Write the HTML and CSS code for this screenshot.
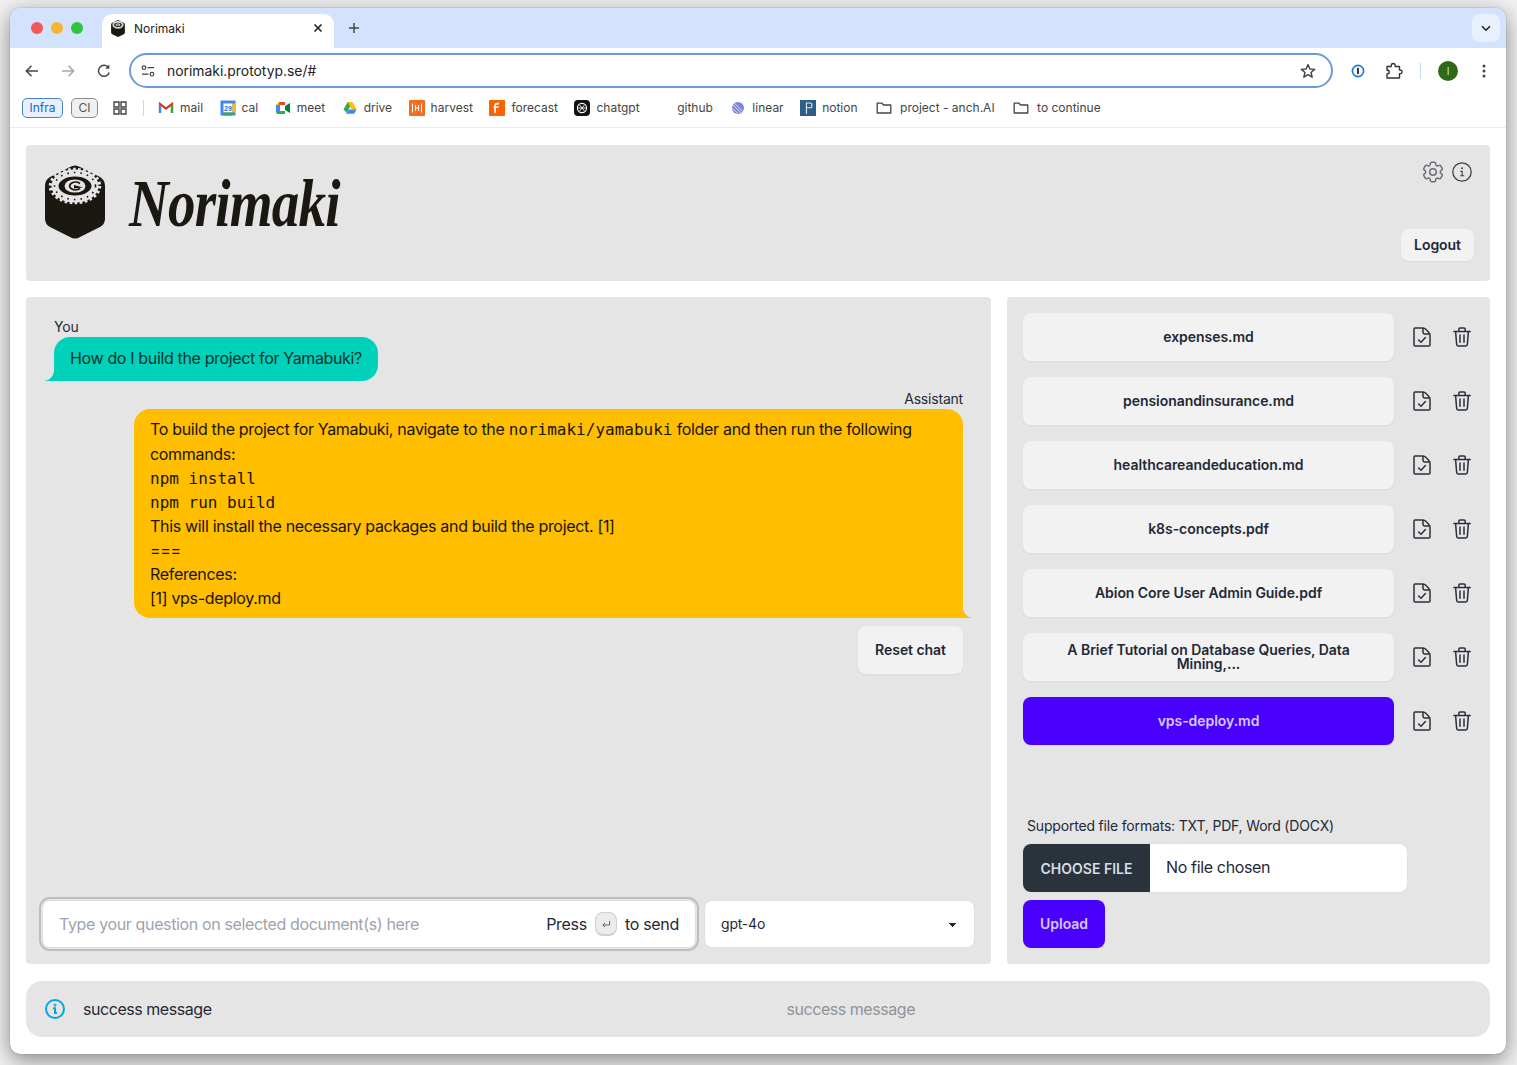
FILE: index.html
```html
<!DOCTYPE html>
<html lang="en">
<head>
    <meta charset="UTF-8">
    <title>Norimaki</title>
    <link rel="stylesheet" href="styles.css">
</head>
<body>
    <svg class="defs" width="0" height="0">
        <symbol id="roll" viewBox="0 0 60 74">
            <path d="M25 2 Q30 -1 35 2 L55 12 Q60 15 60 21 V54 Q60 59 55 62 L35 72 Q30 75 25 72 L5 62 Q0 59 0 54 V21 Q0 15 5 12 Z" fill="#1b1811"/>
            <ellipse cx="30" cy="21" rx="20" ry="13" fill="none" stroke="#e5e5e5" stroke-width="7"/>
            <ellipse cx="30" cy="21" rx="24.5" ry="16.5" fill="none" stroke="#e5e5e5" stroke-width="3.5" stroke-dasharray="2.6 2.4"/>
            <ellipse cx="30" cy="21" rx="20.5" ry="13.5" fill="none" stroke="#1b1811" stroke-width="1.6" stroke-dasharray="1.6 5"/>
            <ellipse cx="30" cy="21" rx="13" ry="8.4" fill="#1b1811"/>
            <ellipse cx="30" cy="21" rx="10.5" ry="6.6" fill="#e5e5e5"/>
            <path d="M35 18.4 A6 3.8 0 1 0 35 23.6" fill="none" stroke="#1b1811" stroke-width="1.8"/>
            <path d="M29 20 L38 22.4 L29 23.4 Z" fill="#1b1811"/>
        </symbol>
        <symbol id="folder" viewBox="0 0 16 16">
            <path d="M1.2 3.2 H6 L7.6 5 H14.8 V13 H1.2 Z" fill="none" stroke="#444" stroke-width="1.3" stroke-linejoin="round"/>
        </symbol>
        <symbol id="doc" viewBox="0 0 18 20">
            <path d="M2 1 H10 Q11.5 1 12.8 2.3 L15.8 5.4 Q17 6.6 17 8 V18 Q17 19 16 19 H2 Q1 19 1 18 V2 Q1 1 2 1 Z" fill="none" stroke="#2a323c" stroke-width="1.5"/>
            <path d="M10 1 V5 Q10 7 12 7 H17" fill="none" stroke="#2a323c" stroke-width="1.5"/>
            <path d="M5.6 13 L8 15.3 L12.4 10.6" fill="none" stroke="#2a323c" stroke-width="1.5" stroke-linecap="round" stroke-linejoin="round"/>
        </symbol>
        <symbol id="trash" viewBox="0 0 18 20">
            <path d="M0.8 4.4 H17.2" fill="none" stroke="#2a323c" stroke-width="1.5" stroke-linecap="round"/>
            <path d="M5.8 4 V2.2 Q5.8 1 7 1 H11 Q12.2 1 12.2 2.2 V4" fill="none" stroke="#2a323c" stroke-width="1.5"/>
            <path d="M2.6 4.6 L3.6 17 Q3.8 19 5.6 19 H12.4 Q14.2 19 14.4 17 L15.4 4.6" fill="none" stroke="#2a323c" stroke-width="1.5"/>
            <path d="M7 8 V15.2 M11 8 V15.2" fill="none" stroke="#2a323c" stroke-width="1.5" stroke-linecap="round"/>
        </symbol>
    </svg>

    <div class="window">
        <div class="tabstrip">
            <div class="lights">
                <span class="light red"></span>
                <span class="light yellow"></span>
                <span class="light green"></span>
            </div>
            <div class="tab">
                <svg class="tab-icon" width="14" height="17"><use href="#roll"/></svg>
                <span class="tab-title">Norimaki</span>
                <svg class="tab-close" width="10" height="10" viewBox="0 0 10 10"><path d="M1.5 1.5 L8.5 8.5 M8.5 1.5 L1.5 8.5" stroke="#222" stroke-width="1.6"/></svg>
            </div>
            <svg class="tab-new" width="12" height="12" viewBox="0 0 12 12"><path d="M6 1 V11 M1 6 H11" stroke="#444" stroke-width="1.5"/></svg>
            <div class="tab-search">
                <svg width="10" height="7" viewBox="0 0 10 7"><path d="M1 1.2 L5 5.2 L9 1.2" fill="none" stroke="#222" stroke-width="1.6"/></svg>
            </div>
        </div>

        <div class="toolbar">
            <svg class="nav-icon" width="16" height="16" viewBox="0 0 16 16"><path d="M14 8 H2.5 M7.5 2.8 L2.3 8 L7.5 13.2" fill="none" stroke="#474747" stroke-width="1.5"/></svg>
            <svg class="nav-icon" width="16" height="16" viewBox="0 0 16 16"><path d="M2 8 H13.5 M8.5 2.8 L13.7 8 L8.5 13.2" fill="none" stroke="#a8a8a8" stroke-width="1.5"/></svg>
            <svg class="nav-icon" width="16" height="16" viewBox="0 0 16 16"><path d="M13.2 9.5 A5.5 5.5 0 1 1 12.4 4.6" fill="none" stroke="#474747" stroke-width="1.5"/><path d="M13.4 1.6 V5.8 H9.2 Z" fill="#474747"/></svg>
            <div class="omnibox">
                <svg width="14" height="12" viewBox="0 0 14 12"><circle cx="3" cy="2.6" r="1.8" fill="none" stroke="#444" stroke-width="1.2"/><path d="M6.5 2.6 H13 M1 9.2 H7.5" stroke="#444" stroke-width="1.3"/><circle cx="11" cy="9.2" r="1.8" fill="none" stroke="#444" stroke-width="1.2"/></svg>
                <span class="url">norimaki.prototyp.se/#</span>
                <svg class="star" width="16" height="16" viewBox="0 0 16 16"><path d="M8 1.6 L9.9 6 L14.7 6.4 L11 9.5 L12.2 14.2 L8 11.7 L3.8 14.2 L5 9.5 L1.3 6.4 L6.1 6 Z" fill="none" stroke="#444" stroke-width="1.4" stroke-linejoin="round"/></svg>
            </div>
            <svg class="ext-pass" width="14" height="14" viewBox="0 0 14 14"><circle cx="7" cy="7" r="5.6" fill="none" stroke="#1a73e8" stroke-width="1.6"/><rect x="6.1" y="3.8" width="1.8" height="6.4" rx="0.6" fill="#222"/></svg>
            <svg class="ext-puzzle" width="18" height="18" viewBox="0 0 18 18"><path d="M2 4.5 H6.2 Q6 1.5 8.2 1.5 Q10.4 1.5 10.2 4.5 H14.5 V8 Q17 7.8 17 9.8 Q17 11.8 14.5 11.6 V16 H2 V12 Q4.2 11.8 4.2 10 Q4.2 8.2 2 8 Z" fill="none" stroke="#333" stroke-width="1.4" stroke-linejoin="round"/></svg>
            <span class="toolbar-sep"></span>
            <span class="avatar">I</span>
            <svg class="kebab" width="4" height="14" viewBox="0 0 4 14"><circle cx="2" cy="2" r="1.5" fill="#444"/><circle cx="2" cy="7" r="1.5" fill="#444"/><circle cx="2" cy="12" r="1.5" fill="#444"/></svg>
        </div>

        <div class="bookmarks">
            <span class="chip chip-blue">Infra</span>
            <span class="chip chip-gray">CI</span>
            <svg class="apps" width="14" height="14" viewBox="0 0 14 14"><path d="M1 1 H6 V6 H1 Z M8 1 H13 V6 H8 Z M1 8 H6 V13 H1 Z M8 8 H13 V13 H8 Z" fill="none" stroke="#444" stroke-width="1.4"/></svg>
            <span class="bookmark-sep"></span>
            <span class="bookmark">
                <svg width="16" height="16" viewBox="0 0 16 16"><path d="M2 13 V4 L8 8.6 L14 4 V13" fill="none" stroke="#d93025" stroke-width="2.2"/><path d="M2 13 V5" stroke="#4285f4" stroke-width="2.4"/><path d="M14 13 V5" stroke="#34a853" stroke-width="2.4"/></svg>
                mail
            </span>
            <span class="bookmark">
                <svg width="16" height="16" viewBox="0 0 16 16"><rect x="0.5" y="0.5" width="15" height="15" fill="#4285f4"/><rect x="3.5" y="3.5" width="9" height="9" fill="#fff"/><rect x="12.5" y="3.5" width="3" height="9" fill="#fbbc04"/><rect x="3.5" y="12.5" width="9" height="3" fill="#34a853"/><text class="cal-day" x="8" y="11">29</text></svg>
                cal
            </span>
            <span class="bookmark">
                <svg width="16" height="16" viewBox="0 0 16 16"><path d="M1 5 L4 2 H10 V6 H1 Z" fill="#fbbc04"/><path d="M1 5 H5 V11 H1 Z" fill="#4285f4"/><path d="M1 11 H10 V14 H3 Q1 14 1 12 Z" fill="#34a853"/><path d="M5 5 H10 V11 H5 Z" fill="#fff"/><path d="M10 6 L15 3 V13 L10 10 Z" fill="#00832d"/><path d="M4 2 H10 V5 H4 Z" fill="#ea4335"/></svg>
                meet
            </span>
            <span class="bookmark">
                <svg width="16" height="16" viewBox="0 0 16 16"><path d="M5.6 2 H10.4 L7.4 8 L4.7 12.8 L1.5 9.5 Z" fill="#34a853"/><path d="M5.6 2 H10.4 L14.6 9.5 H9.6 Z" fill="#fbbc04"/><path d="M4 13.8 L6.6 9.5 H14.6 L12.2 13.8 Z" fill="#4285f4"/></svg>
                drive
            </span>
            <span class="bookmark">
                <svg width="16" height="16" viewBox="0 0 16 16"><rect width="16" height="16" rx="1" fill="#f36c21"/><path d="M3.5 3.5 V12.5 M6.5 5 V11 M9.5 5 V11 M12.5 3.5 V12.5 M6.5 8 H9.5" stroke="#fff" stroke-width="1.1"/></svg>
                harvest
            </span>
            <span class="bookmark">
                <svg width="16" height="16" viewBox="0 0 16 16"><rect width="16" height="16" rx="1" fill="#f96302"/><path d="M6 13 V6 Q6 3.6 8.4 3.6 H10 M4.6 7 H9.6" fill="none" stroke="#fff" stroke-width="1.6"/></svg>
                forecast
            </span>
            <span class="bookmark">
                <svg width="16" height="16" viewBox="0 0 16 16"><rect width="16" height="16" rx="4" fill="#111"/><circle cx="8" cy="8" r="4.6" fill="none" stroke="#fff" stroke-width="1.1"/><path d="M5.6 5 L10.4 11 M10.4 5 L5.6 11 M3.6 8 H12.4" stroke="#fff" stroke-width="0.9"/></svg>
                chatgpt
            </span>
            <span class="bookmark bookmark-wide">
                <span class="blank-icon"></span>
                github
            </span>
            <span class="bookmark">
                <svg width="16" height="16" viewBox="0 0 16 16"><circle cx="8" cy="8" r="6" fill="#7b86d8"/><path d="M3 5 L11 13 M2.4 8 L8 13.6 M4.6 3.4 L12.6 11.4" stroke="#e4e7fa" stroke-width="0.9"/></svg>
                linear
            </span>
            <span class="bookmark">
                <svg width="16" height="16" viewBox="0 0 16 16"><rect width="16" height="16" fill="#2f5f86"/><path d="M6.4 14 V3 H10 Q12 3 12 5.4 Q12 7.8 10 7.8 H6.4" fill="none" stroke="#dfe8f0" stroke-width="1.1"/></svg>
                notion
            </span>
            <span class="bookmark bookmark-folder">
                <svg width="16" height="16"><use href="#folder"/></svg>
                project - anch.AI
            </span>
            <span class="bookmark bookmark-folder">
                <svg width="16" height="16"><use href="#folder"/></svg>
                to continue
            </span>
        </div>

        <div class="page">
            <div class="panel top-panel">
                <div class="brand">
                    <svg class="brand-icon" width="60" height="74"><use href="#roll"/></svg>
                    <span class="brand-name">Norimaki</span>
                </div>
                <div class="top-actions">
                    <div class="top-icons">
                        <svg width="26" height="26" viewBox="0 0 24 24" fill="none" stroke="#6b6f75" stroke-width="1.4"><path d="M9.594 3.94c.09-.542.56-.94 1.11-.94h2.593c.55 0 1.02.398 1.11.94l.213 1.281c.063.374.313.686.645.87.074.04.147.083.22.127.325.196.72.257 1.075.124l1.217-.456a1.125 1.125 0 0 1 1.37.49l1.296 2.247a1.125 1.125 0 0 1-.26 1.431l-1.003.827c-.293.241-.438.613-.43.992a7.723 7.723 0 0 1 0 .255c-.008.378.137.75.43.991l1.004.827c.424.35.534.955.26 1.43l-1.298 2.247a1.125 1.125 0 0 1-1.369.491l-1.217-.456c-.355-.133-.75-.072-1.076.124a6.47 6.47 0 0 1-.22.128c-.331.183-.581.495-.644.869l-.213 1.281c-.09.543-.56.94-1.11.94h-2.594c-.55 0-1.019-.398-1.11-.94l-.213-1.281c-.062-.374-.312-.686-.644-.87a6.52 6.52 0 0 1-.22-.127c-.325-.196-.72-.257-1.076-.124l-1.217.456a1.125 1.125 0 0 1-1.369-.49l-1.297-2.247a1.125 1.125 0 0 1 .26-1.431l1.004-.827c.292-.24.437-.613.43-.991a6.932 6.932 0 0 1 0-.255c.007-.38-.138-.751-.43-.992l-1.004-.827a1.125 1.125 0 0 1-.26-1.43l1.297-2.247a1.125 1.125 0 0 1 1.37-.491l1.216.456c.356.133.751.072 1.076-.124.072-.044.146-.086.22-.128.332-.183.582-.495.644-.869l.214-1.28Z"/><path d="M15 12a3 3 0 1 1-6 0 3 3 0 0 1 6 0Z"/></svg>
                        <svg width="22" height="22" viewBox="0 0 22 22" fill="none" stroke="#3f444b" stroke-width="1.3"><circle cx="11" cy="11" r="9.2"/><path d="M9.8 10.4 H11.2 V14.8 M9.6 14.8 H12.8" stroke-width="1.1" stroke-linecap="round"/><circle cx="11" cy="7.2" r="0.4"/></svg>
                    </div>
                    <button class="btn btn-sm">Logout</button>
                </div>
            </div>

            <div class="main-row">
                <div class="panel chat-panel">
                    <div class="chat chat-start">
                        <div class="chat-header">You</div>
                        <div class="bubble bubble-user">How do I build the project for Yamabuki?</div>
                    </div>
                    <div class="chat chat-end">
                        <div class="chat-header">Assistant</div>
                        <div class="bubble bubble-assistant">
                            <div class="bubble-line">To build the project for Yamabuki, navigate to the <code>norimaki/yamabuki</code> folder and then run the following</div>
                            <div class="bubble-line">commands:</div>
                            <div class="bubble-line"><code>npm install</code></div>
                            <div class="bubble-line"><code>npm run build</code></div>
                            <div class="bubble-line">This will install the necessary packages and build the project. [1]</div>
                            <div class="bubble-line">===</div>
                            <div class="bubble-line">References:</div>
                            <div class="bubble-line">[1] vps-deploy.md</div>
                        </div>
                    </div>
                    <div class="chat-reset">
                        <button class="btn btn-reset">Reset chat</button>
                    </div>
                    <div class="chat-form">
                        <label class="question">
                            <input class="question-input" type="text" placeholder="Type your question on selected document(s) here">
                            <span class="press">Press</span>
                            <span class="kbd">
                                <svg width="10" height="8" viewBox="0 0 10 8"><path d="M8.6 1 V5 H2 M4 3 L1.8 5 L4 7" fill="none" stroke="#555" stroke-width="0.9"/></svg>
                            </span>
                            <span class="press">to send</span>
                        </label>
                        <select class="model-select">
                            <option>gpt-4o</option>
                        </select>
                    </div>
                </div>

                <div class="panel side-panel">
                    <div class="files">
                        <div class="file-row">
                            <button class="btn file-btn">expenses.md</button>
                            <svg class="row-icon" width="18" height="20"><use href="#doc"/></svg>
                            <svg class="row-icon" width="18" height="20"><use href="#trash"/></svg>
                        </div>
                        <div class="file-row">
                            <button class="btn file-btn">pensionandinsurance.md</button>
                            <svg class="row-icon" width="18" height="20"><use href="#doc"/></svg>
                            <svg class="row-icon" width="18" height="20"><use href="#trash"/></svg>
                        </div>
                        <div class="file-row">
                            <button class="btn file-btn">healthcareandeducation.md</button>
                            <svg class="row-icon" width="18" height="20"><use href="#doc"/></svg>
                            <svg class="row-icon" width="18" height="20"><use href="#trash"/></svg>
                        </div>
                        <div class="file-row">
                            <button class="btn file-btn">k8s-concepts.pdf</button>
                            <svg class="row-icon" width="18" height="20"><use href="#doc"/></svg>
                            <svg class="row-icon" width="18" height="20"><use href="#trash"/></svg>
                        </div>
                        <div class="file-row">
                            <button class="btn file-btn">Abion Core User Admin Guide.pdf</button>
                            <svg class="row-icon" width="18" height="20"><use href="#doc"/></svg>
                            <svg class="row-icon" width="18" height="20"><use href="#trash"/></svg>
                        </div>
                        <div class="file-row">
                            <button class="btn file-btn">A Brief Tutorial on Database Queries, Data Mining,...</button>
                            <svg class="row-icon" width="18" height="20"><use href="#doc"/></svg>
                            <svg class="row-icon" width="18" height="20"><use href="#trash"/></svg>
                        </div>
                        <div class="file-row">
                            <button class="btn file-btn btn-primary">vps-deploy.md</button>
                            <svg class="row-icon" width="18" height="20"><use href="#doc"/></svg>
                            <svg class="row-icon" width="18" height="20"><use href="#trash"/></svg>
                        </div>
                    </div>
                    <div class="upload">
                        <div class="formats">Supported file formats: TXT, PDF, Word (DOCX)</div>
                        <div class="file-input">
                            <span class="file-choose">Choose file</span>
                            <span class="file-none">No file chosen</span>
                        </div>
                        <button class="btn btn-primary upload-btn">Upload</button>
                    </div>
                </div>
            </div>

            <div class="alert">
                <svg width="24" height="24" viewBox="0 0 24 24" fill="none" stroke="#00a4ef" stroke-width="2"><circle cx="12" cy="12" r="9"/><path d="M10.8 11.2 H12 V16 H13.2" stroke-linecap="round"/><circle cx="12" cy="8" r="0.5"/></svg>
                <span class="alert-msg">success message</span>
                <span class="alert-center">success message</span>
            </div>
        </div>
    </div>
</body>
</html>
```

FILE: styles.css
```css
html, body {
    height: 100%;
}
body {
    font-family: Inter, "Liberation Sans", sans-serif;
    background-color: #f1f1f1;
    margin: 0;
    padding: 8px 11px 0 10px;
    box-sizing: border-box;
    overflow: hidden;
    color: #1f2937;
}
.defs {
    display: block;
    height: 0;
}
.window {
    width: 1496px;
    height: 1046px;
    background-color: #ffffff;
    border-radius: 10px;
    overflow: hidden;
    box-shadow: 0 6px 22px rgba(0, 0, 0, 0.45), 0 0 1px rgba(0, 0, 0, 0.5);
}

/* browser chrome */
.tabstrip {
    height: 40px;
    background-color: #d3e3fd;
    display: flex;
    align-items: flex-end;
    box-sizing: border-box;
}
.lights {
    display: flex;
    gap: 8px;
    align-self: flex-start;
    margin: 14px 0 0 21px;
}
.light {
    width: 12px;
    height: 12px;
    border-radius: 50%;
}
.red { background-color: #f2575a; }
.yellow { background-color: #f5b52e; }
.green { background-color: #2ec440; }
.tab {
    width: 232px;
    height: 34px;
    margin-left: 19px;
    background-color: #ffffff;
    border-radius: 10px 10px 0 0;
    display: flex;
    align-items: center;
    padding: 0 11px 6px 9px;
    box-sizing: border-box;
}
.tab-icon {
    flex: none;
}
.tab-title {
    flex: 1;
    font-size: 12px;
    color: #222;
    margin-left: 9px;
}
.tab-new {
    margin: 0 0 14px 14px;
}
.tab-search {
    margin: 0 6px 6px auto;
    width: 28px;
    height: 28px;
    border-radius: 8px;
    background-color: #e9f0fd;
    display: flex;
    align-items: center;
    justify-content: center;
}
.toolbar {
    height: 44px;
    display: flex;
    align-items: center;
    padding: 2px 0 0 14px;
    background-color: #ffffff;
    box-sizing: border-box;
}
.nav-icon {
    margin-right: 20px;
    flex: none;
}
.nav-icon:nth-child(3) {
    margin-right: 17px;
}
.omnibox {
    width: 1204px;
    height: 35px;
    margin-top: -1px;
    flex: none;
    box-sizing: border-box;
    border: 2px solid #6f9ad8;
    border-radius: 18px;
    display: flex;
    align-items: center;
    padding: 0 15px 0 10px;
}
.url {
    margin-left: 12px;
    font-size: 13.9px;
    color: #222;
}
.star {
    margin-left: auto;
}
.ext-pass {
    margin-left: 18px;
    flex: none;
}
.ext-puzzle {
    margin-left: 20px;
    flex: none;
}
.toolbar-sep {
    width: 1px;
    height: 16px;
    background-color: #c9d7ee;
    margin-left: 17px;
}
.avatar {
    width: 20px;
    height: 20px;
    margin-left: 17px;
    border-radius: 50%;
    background-color: #2d6a1c;
    color: #d9e8d2;
    font-size: 10px;
    display: flex;
    align-items: center;
    justify-content: center;
    flex: none;
}
.kebab {
    margin-left: 24px;
    flex: none;
}
.bookmarks {
    height: 36px;
    box-sizing: border-box;
    border-bottom: 1px solid #ececec;
    padding: 0 0 4px 12px;
    display: flex;
    align-items: center;
    font-size: 12px;
    color: #444;
}
.chip {
    height: 20px;
    box-sizing: border-box;
    border-radius: 5px;
    display: flex;
    align-items: center;
    justify-content: center;
    font-size: 12px;
}
.chip-blue {
    width: 41px;
    border: 1px solid #4a7fc9;
    background-color: #e8f0fd;
    color: #1f66c1;
}
.chip-gray {
    width: 27px;
    margin-left: 8px;
    border: 1px solid #8a8a8a;
    background-color: #f0f0f2;
    color: #555;
}
.apps {
    margin-left: 15px;
}
.bookmark-sep {
    width: 1px;
    height: 16px;
    background-color: #c9d7ee;
    margin: 0 7px 0 16px;
}
.bookmark {
    display: flex;
    align-items: center;
    gap: 6px;
    margin-left: 7px;
    margin-right: 9.5px;
    white-space: nowrap;
}
.bookmark svg {
    flex: none;
}
.bookmark-wide {
    margin-left: 6px;
    margin-right: 10.5px;
}
.bookmark-folder {
    gap: 8px;
    margin-left: 9px;
}
.blank-icon {
    width: 16px;
    height: 16px;
}
.cal-day {
    font-family: "Liberation Sans", sans-serif;
    font-size: 7px;
    font-weight: bold;
    fill: #1a73e8;
    text-anchor: middle;
}

/* app */
.page {
    padding: 17px 16px;
    display: flex;
    flex-direction: column;
}
.panel {
    background-color: #e5e5e5;
    border-radius: 4px;
    box-sizing: border-box;
}
.top-panel {
    height: 136px;
    display: flex;
    justify-content: space-between;
    padding: 20px 16px 20px 19px;
}
.brand {
    display: flex;
    align-items: flex-start;
}
.brand-name {
    font-family: "Liberation Serif", serif;
    font-style: italic;
    font-weight: bold;
    font-size: 68px;
    line-height: 76px;
    color: #1b1811;
    margin-left: 24px;
    letter-spacing: -1px;
    transform: scaleX(0.81);
    transform-origin: left center;
}
.top-actions {
    display: flex;
    flex-direction: column;
    align-items: flex-end;
    justify-content: space-between;
}
.top-icons {
    display: flex;
    align-items: center;
    gap: 5px;
    margin-top: -6px;
    margin-right: 1px;
}
.btn {
    font-family: Inter, "Liberation Sans", sans-serif;
    background-color: #f2f2f2;
    color: #1f2937;
    border: none;
    border-radius: 8px;
    height: 48px;
    padding: 0 16px;
    font-size: 14px;
    font-weight: 600;
    line-height: 14px;
    letter-spacing: -0.05px;
    box-shadow: 0 1px 2px rgba(0, 0, 0, 0.05);
}
.btn-sm {
    height: 32px;
    padding: 0 13px;
}
.btn-reset {
    padding: 0 17px;
}
.btn-primary {
    background-color: #4a00ff;
    color: #d6c8ff;
}
.main-row {
    display: flex;
    gap: 16px;
    margin-top: 16px;
    height: 667px;
}
.chat-panel {
    width: 965px;
    padding: 16px;
    display: flex;
    flex-direction: column;
}
.chat {
    padding: 4px 12px;
    display: flex;
    flex-direction: column;
}
.chat-end {
    align-items: flex-end;
}
.chat-start {
    align-items: flex-start;
}
.chat-header {
    font-size: 14px;
    line-height: 20px;
    letter-spacing: -0.2px;
}
.bubble {
    position: relative;
    font-size: 16px;
    line-height: 24px;
    letter-spacing: -0.32px;
    padding: 8px 16px;
    box-sizing: border-box;
    border-radius: 16px;
}
.bubble-user {
    min-height: 44px;
    padding-top: 9px;
    padding-bottom: 7px;
    background-color: #00d1b9;
    color: #00332c;
    border-bottom-left-radius: 0;
    letter-spacing: -0.35px;
}
.bubble-user::before {
    content: "";
    position: absolute;
    left: -10px;
    bottom: 0;
    width: 10px;
    height: 10px;
    background: radial-gradient(circle at 0 0, transparent 9.5px, #00d1b9 10px);
}
.bubble-assistant {
    width: 829px;
    background-color: #ffbe00;
    color: #1a1300;
    border-bottom-right-radius: 0;
}
.bubble-assistant::before {
    content: "";
    position: absolute;
    right: -10px;
    bottom: 0;
    width: 10px;
    height: 10px;
    background: radial-gradient(circle at 100% 0, transparent 9.5px, #ffbe00 10px);
}
.bubble-line {
    height: 24px;
    white-space: nowrap;
}
.bubble-line:first-child {
    height: 25px;
}
code {
    font-family: "DejaVu Sans Mono", "Liberation Mono", monospace;
    font-size: 16px;
    letter-spacing: 0;
}
.chat-reset {
    display: flex;
    justify-content: flex-end;
    padding: 4px 12px 0 0;
}
.chat-form {
    margin-top: auto;
    display: flex;
    gap: 8px;
}
.question {
    flex: 1;
    height: 48px;
    box-sizing: border-box;
    background-color: #ffffff;
    border-radius: 8px;
    border: 1px solid #e0e0e0;
    outline: 2px solid #bdbdbd;
    outline-offset: 1px;
    display: flex;
    align-items: center;
    padding: 0 16px;
    gap: 8px;
    font-size: 16px;
}
.question-input {
    flex: 1;
    min-width: 0;
    border: none;
    outline: none;
    background: transparent;
    padding: 0;
    font-family: Inter, "Liberation Sans", sans-serif;
    font-size: 16px;
    letter-spacing: -0.36px;
}
.question-input::placeholder {
    color: #9ca3af;
}
.press {
    color: #1f2937;
    letter-spacing: -0.3px;
}
.kbd {
    width: 22px;
    height: 24px;
    box-sizing: border-box;
    border: 1px solid #cfcfcf;
    border-bottom-width: 2px;
    border-radius: 8px;
    background-color: #ececec;
    display: flex;
    align-items: center;
    justify-content: center;
}
.model-select {
    width: 271px;
    height: 48px;
    flex: none;
    box-sizing: border-box;
    appearance: none;
    border: 1px solid #e0e0e0;
    border-radius: 8px;
    padding: 0 16px 2px;
    font-family: Inter, "Liberation Sans", sans-serif;
    font-size: 14px;
    letter-spacing: -0.2px;
    color: #1f2937;
    background-color: #ffffff;
    background-image: linear-gradient(45deg, transparent 50%, #1f2937 50%), linear-gradient(135deg, #1f2937 50%, transparent 50%);
    background-position: calc(100% - 21px) calc(50% + 1px), calc(100% - 17px) calc(50% + 1px);
    background-size: 4px 4px;
    background-repeat: no-repeat;
}
.side-panel {
    width: 483px;
    padding: 16px;
    display: flex;
    flex-direction: column;
}
.files {
    display: flex;
    flex-direction: column;
    gap: 16px;
}
.file-row {
    display: flex;
    align-items: center;
}
.file-btn {
    width: 371px;
    flex: none;
    margin-right: 19px;
    padding: 0 40px;
}
.row-icon {
    flex: none;
    margin-right: 22px;
}
.upload {
    margin-top: auto;
}
.formats {
    font-size: 14px;
    line-height: 20px;
    letter-spacing: -0.18px;
    margin: 0 0 8px 4px;
}
.file-input {
    width: 384px;
    height: 48px;
    border-radius: 8px;
    overflow: hidden;
    background-color: #ffffff;
    box-shadow: 0 0 0 1px #e0e0e0;
    display: flex;
    align-items: center;
}
.file-choose {
    width: 127px;
    height: 100%;
    background-color: #2a323c;
    color: #d7dde4;
    font-size: 14px;
    font-weight: 600;
    text-transform: uppercase;
    display: flex;
    align-items: center;
    justify-content: center;
}
.file-none {
    margin: 0 0 2px 16px;
    font-size: 16px;
    letter-spacing: -0.35px;
}
.upload-btn {
    display: block;
    width: 82px;
    padding: 0;
    margin-top: 8px;
}
.alert {
    margin-top: 17px;
    height: 56px;
    border-radius: 16px;
    background-color: #e5e5e5;
    padding: 0 16px 0 17px;
    display: flex;
    align-items: center;
    gap: 16px;
    font-size: 16px;
    letter-spacing: -0.45px;
}
.alert-center {
    flex: 1;
    text-align: center;
    color: #8f9399;
}
```
